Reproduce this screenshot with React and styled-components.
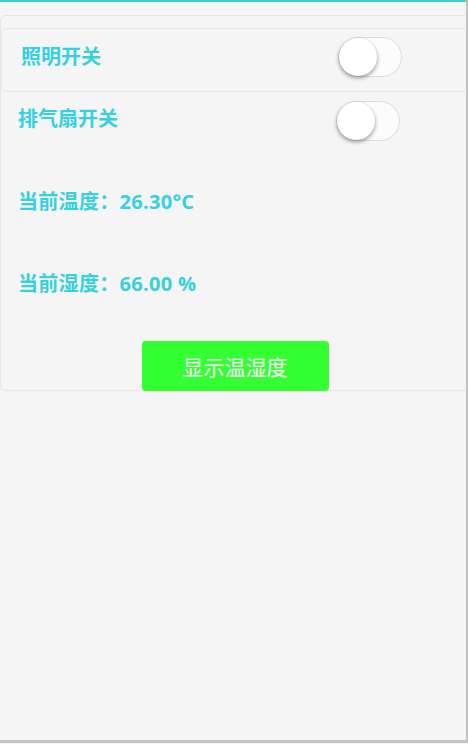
import React from "react";
import styled, { createGlobalStyle } from "styled-components";

const Global = createGlobalStyle`
  html, body { margin: 0; padding: 0; background: #f5f5f5; }
  body { font-family: "Open Sans", "Noto Sans CJK SC", sans-serif; }
`;

const CYAN = "#35d1de";

const Frame = styled.div`
  box-sizing: border-box;
  width: 468px;
  height: 743px;
  border-right: 2px solid #c2c2c2;
  border-bottom: 3px solid #c4c4c4;
  background: #f5f5f5;
  overflow: hidden;
  display: flex;
  flex-direction: column;
`;

const TopBar = styled.div`
  height: 2px;
  background: ${CYAN};
  flex: none;
`;

const Card = styled.div`
  box-sizing: border-box;
  width: 470px;
  margin-top: 13px;
  border: 1px solid #e6e6e6;
  border-radius: 6px;
  padding-top: 12px;
  display: flex;
  flex-direction: column;
`;

const InnerCard = styled.div`
  box-sizing: border-box;
  height: 64px;
  border: 1px solid #e6e6e6;
  border-radius: 6px;
  padding-left: 19px;
  display: flex;
  align-items: center;
`;

const SwitchRow = styled.div`
  height: 40px;
  margin-top: 9px;
  padding-left: 17px;
  display: flex;
  align-items: center;
`;

const Label = styled.span`
  width: ${(p) => p.$w}px;
  flex: none;
  color: ${CYAN};
  font-size: 20px;
  font-weight: 700;
  line-height: 30px;
  margin-top: ${(p) => p.$dy || 0}px;
`;

const Track = styled.div`
  position: relative;
  box-sizing: border-box;
  width: 64px;
  height: 40px;
  border: 1px solid #dcdcdc;
  border-radius: 20px;
  background: #fcfcfc;
  margin-top: ${(p) => p.$dy || 0}px;
`;

const Knob = styled.div`
  position: absolute;
  left: 0;
  top: 0;
  width: 38px;
  height: 38px;
  border-radius: 50%;
  background: #fff;
  box-shadow: 0 2px 4px rgba(0, 0, 0, 0.4);
`;

const Reading = styled.div`
  padding-left: 17px;
  margin-top: ${(p) => p.$mt}px;
  color: ${CYAN};
  font-size: 20px;
  font-weight: 700;
  line-height: 30px;
  letter-spacing: 0.3px;
`;

const ButtonRow = styled.div`
  display: flex;
  justify-content: center;
  margin-top: 42px;
  margin-bottom: -1px;
`;

const ShowButton = styled.button`
  width: 187px;
  height: 50px;
  border: none;
  border-radius: 4px;
  background: #33ff33;
  color: #fff;
  font-family: "Noto Sans CJK SC", sans-serif;
  font-size: 21px;
  font-weight: 400;
  padding: 0;
  cursor: pointer;
`;

function Switch({ dy }) {
  return (
    <Track $dy={dy}>
      <Knob />
    </Track>
  );
}

export default function App() {
  return (
    <>
      <Global />
      <Frame>
        <TopBar />
        <Card>
          <InnerCard>
            <Label $w={317} $dy={-6}>照明开关</Label>
            <Switch dy={-6} />
          </InnerCard>
          <SwitchRow>
            <Label $w={318} $dy={-4}>排气扇开关</Label>
            <Switch />
          </SwitchRow>
          <Reading $mt={46}>当前温度：26.30°C</Reading>
          <Reading $mt={52}>当前湿度：66.00 %</Reading>
          <ButtonRow>
            <ShowButton>显示温湿度</ShowButton>
          </ButtonRow>
        </Card>
      </Frame>
    </>
  );
}
